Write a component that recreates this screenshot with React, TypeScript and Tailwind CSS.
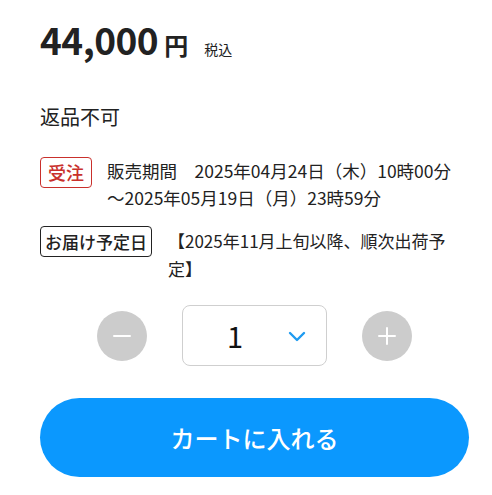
import React from "react";

const font = { fontFamily: '"Noto Sans CJK JP", "Noto Sans", sans-serif' };

const App = () => {
  return (
    <div className="bg-white w-[492px] h-[495px] pl-10 pr-[23px] pt-[14px] text-[#222]" style={font}>
      <div className="flex items-baseline">
        <span className="text-[37px] font-semibold leading-[50px] tracking-[-0.5px]">44,000</span>
        <span className="text-[24px] font-bold ml-[6px]">円</span>
        <span className="text-[14px] ml-[16px]">税込</span>
      </div>

      <p className="mt-[39px] text-[20px] leading-[28px]">返品不可</p>

      <div className="mt-[26px] flex items-start">
        <span className="shrink-0 border border-[#c9302c] text-[#c9302c] rounded-[4px] text-[18px] leading-[29px] px-[7px] font-medium">
          受注
        </span>
        <p className="ml-[15px] text-[17.5px] leading-[27px] whitespace-nowrap">
          販売期間　2025年04月24日（木）10時00分
          <br />
          ～2025年05月19日（月）23時59分
        </p>
      </div>

      <div className="mt-[15px] flex items-start">
        <span className="shrink-0 border border-[#222] rounded-[4px] text-[17px] leading-[29px] px-[4px] font-medium">
          お届け予定日
        </span>
        <p className="ml-[16px] mt-[1px] text-[17px] leading-[28px] w-[285px]">
          【2025年11月上旬以降、順次出荷予定】
        </p>
      </div>

      <div className="mt-[22px] flex items-center justify-center gap-[35px]">
        <button className="w-[50px] h-[50px] rounded-full bg-[#cccccc] flex items-center justify-center">
          <svg width="20" height="20" viewBox="0 0 20 20">
            <path d="M2 10h16" stroke="#fff" strokeWidth="2" strokeLinecap="round" />
          </svg>
        </button>
        <div className="w-[145px] h-[61px] rounded-[8px] border border-[#cfcfcf] flex items-center pl-[44px] pr-[20px]">
          <span className="text-[29px] leading-none text-[#111]">1</span>
          <svg className="ml-auto" width="18" height="12" viewBox="0 0 18 12">
            <path d="M2 3l7 7 7-7" fill="none" stroke="#1f9bf0" strokeWidth="2.4" strokeLinecap="round" strokeLinejoin="round" />
          </svg>
        </div>
        <button className="w-[50px] h-[50px] rounded-full bg-[#cccccc] flex items-center justify-center">
          <svg width="20" height="20" viewBox="0 0 20 20">
            <path d="M2 10h16M10 2v16" stroke="#fff" strokeWidth="2" strokeLinecap="round" />
          </svg>
        </button>
      </div>

      <button className="mt-[32px] w-full h-[79px] rounded-full bg-[#0b98fe] text-white text-[24px] font-medium flex items-center justify-center">
        カートに入れる
      </button>
    </div>
  );
};

export default App;
